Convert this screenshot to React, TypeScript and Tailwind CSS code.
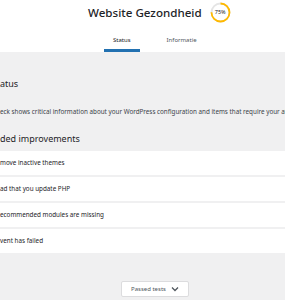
const rows = [
  "move inactive themes",
  "ad that you update PHP",
  "ecommended modules are missing",
  "vent has failed",
];

function ScoreRing({ score }: { score: number }) {
  const circumference = 2 * Math.PI * 9;
  return (
    <div className="relative flex h-[21px] w-[21px] items-center justify-center text-[5.5px]">
      <svg width="21" height="21" viewBox="0 0 21 21" className="absolute inset-0 -rotate-90">
        <circle cx="10.5" cy="10.5" r="9" fill="none" stroke="#e5e5e5" strokeWidth="1.8" />
        <circle
          cx="10.5"
          cy="10.5"
          r="9"
          fill="none"
          stroke="#ffb900"
          strokeWidth="1.8"
          strokeDasharray={`${(circumference * score) / 100} ${circumference}`}
        />
      </svg>
      <span className="relative">{score}%</span>
    </div>
  );
}

export default function App() {
  return (
    <div
      className="h-[300px] w-[285px] overflow-hidden bg-[#f0f0f1] text-[#1d2327]"
      style={{ fontFamily: '"Noto Sans", "Open Sans", sans-serif' }}
    >
      <header className="bg-white">
        <div className="flex h-[27px] items-center gap-[8px] pb-[2px] pl-[88px]">
          <h1 className="text-[11.6px] font-medium leading-none">Website Gezondheid</h1>
          <ScoreRing score={75} />
        </div>
        <nav className="flex h-[25px] gap-[18px] pl-[104px] text-[6px] text-[#50575e]">
          <span className="flex items-center border-b-[3px] border-[#2271b1] px-[9px] pt-[4px] text-[#1d2327]">
            Status
          </span>
          <span className="flex items-center px-[9px] pb-[3px] pt-[4px]">Informatie</span>
        </nav>
      </header>

      <section className="pt-[27px]">
        <h2 className="text-[9px] leading-none">atus</h2>
        <p className="mt-[21px] whitespace-nowrap text-[6.3px] leading-none text-[#3c434a]">
          eck shows critical information about your WordPress configuration and items that require your attention.
        </p>
        <h3 className="mt-[19px] text-[9px] leading-none">ded improvements</h3>
      </section>

      <ul className="mt-[8px] bg-white">
        {rows.map((row) => (
          <li
            key={row}
            className="flex h-[26px] items-center border-b-2 border-[#f0f0f1] text-[6.3px] leading-none"
          >
            {row}
          </li>
        ))}
      </ul>

      <div className="pl-[121px] pt-[26px]">
        <button className="flex h-[16px] w-[68px] items-center justify-center gap-[5px] rounded-[2px] border border-[#dcdcde] bg-white text-[6px] text-[#50575e]">
          Passed tests
          <svg width="8" height="6" viewBox="0 0 8 6" fill="none" stroke="#50575e" strokeWidth="1.3">
            <path d="M1 1.5 4 4.5 7 1.5" />
          </svg>
        </button>
      </div>
    </div>
  );
}
